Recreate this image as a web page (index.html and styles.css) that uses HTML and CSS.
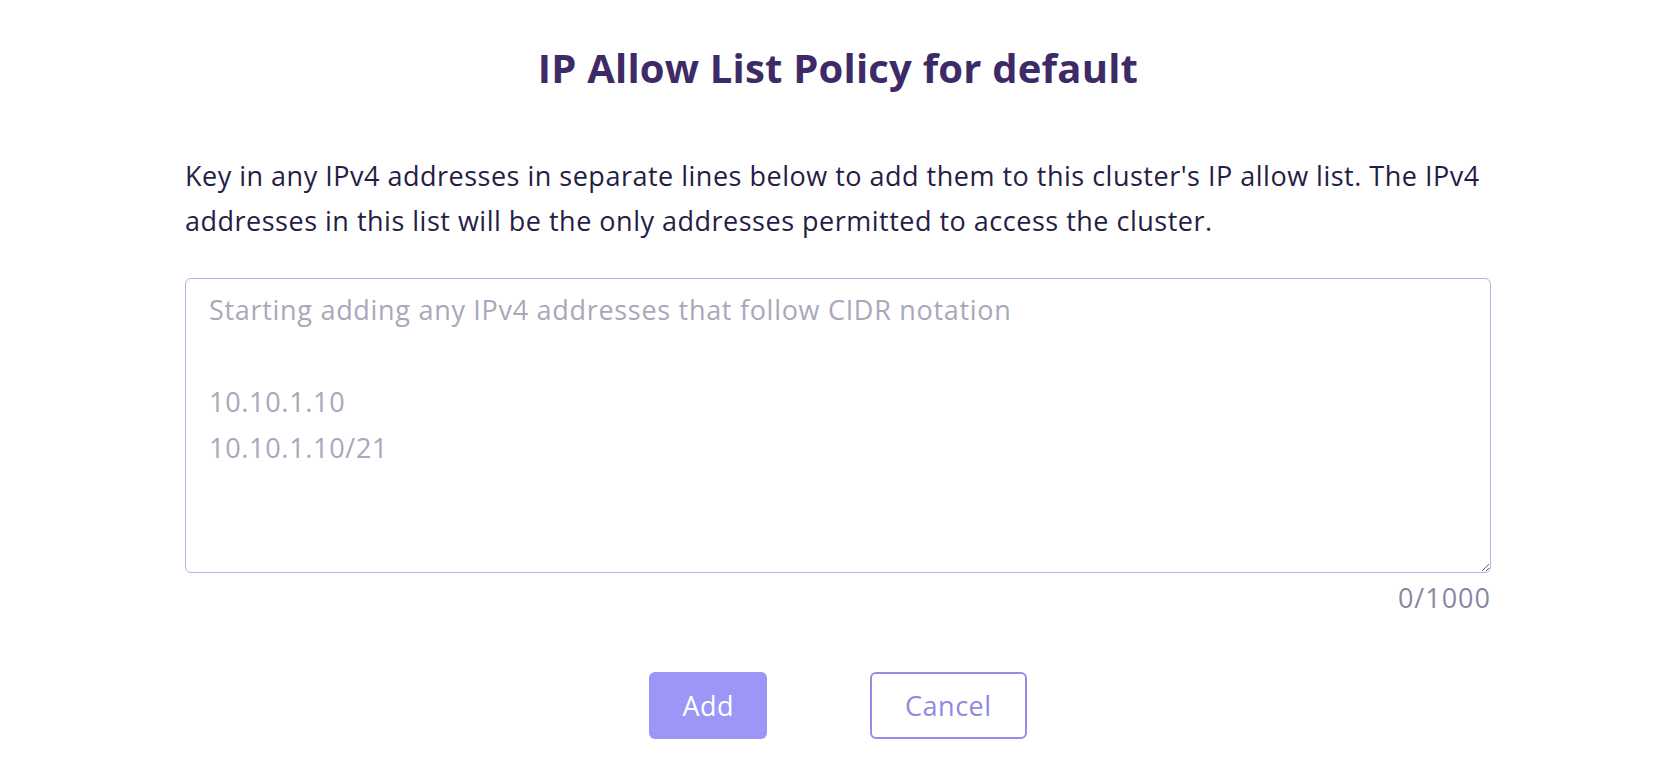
FILE: index.html
```html
<!DOCTYPE html>
<html lang="en">
<head>
<meta charset="utf-8">
<title>IP Allow List Policy for default</title>
<link rel="stylesheet" href="styles.css">
</head>
<body>
<main class="dialog">
  <h1 class="title">IP Allow List Policy for default</h1>
  <p class="intro">Key in any IPv4 addresses in separate lines below to add them to this cluster's IP allow list. The IPv4 addresses in this list will be the only addresses permitted to access the cluster.</p>
  <textarea class="ip-input" placeholder="Starting adding any IPv4 addresses that follow CIDR notation

10.10.1.10
10.10.1.10/21"></textarea>
  <div class="counter">0/1000</div>
  <div class="actions">
    <button class="btn btn-primary" type="button">Add</button>
    <button class="btn btn-secondary" type="button">Cancel</button>
  </div>
</main>
</body>
</html>
```
FILE: styles.css
```css
html, body {
  margin: 0;
  padding: 0;
  background: #ffffff;
}

body {
  font-family: "Open Sans", Lato, "Liberation Sans", sans-serif;
}

.dialog {
  display: flex;
  flex-direction: column;
  padding: 44px 189px 0 185px;
}

.title {
  margin: 0;
  font-size: 40px;
  line-height: 48px;
  font-weight: 700;
  letter-spacing: 0.2px;
  color: #3e2a66;
  text-align: center;
}

.intro {
  margin: 61px 0 0;
  font-size: 27px;
  line-height: 45px;
  letter-spacing: 0.5px;
  color: #261d45;
}

.ip-input {
  box-sizing: border-box;
  margin-top: 35px;
  height: 295px;
  width: 100%;
  padding: 8px 23px;
  border: 1px solid #b8b4e2;
  border-radius: 6px;
  font-family: inherit;
  font-size: 27px;
  line-height: 46px;
  letter-spacing: 0.7px;
  color: #261d45;
  resize: vertical;
  outline: none;
}

.ip-input::placeholder {
  color: #aaa7ba;
  opacity: 1;
}

.counter {
  align-self: flex-end;
  margin-top: 8px;
  font-size: 27px;
  line-height: 34px;
  letter-spacing: 1px;
  color: #8b86a2;
}

.actions {
  display: flex;
  justify-content: center;
  gap: 103px;
  margin-top: 57px;
}

.btn {
  box-sizing: border-box;
  height: 67px;
  padding: 0 33px;
  border-radius: 6px;
  font-family: inherit;
  font-size: 27px;
  letter-spacing: 0.5px;
  cursor: pointer;
}

.btn-primary {
  border: none;
  background: #9c97f6;
  color: #ffffff;
}

.btn-secondary {
  border: 2px solid #928ee6;
  background: #ffffff;
  color: #8e89e4;
}
```
